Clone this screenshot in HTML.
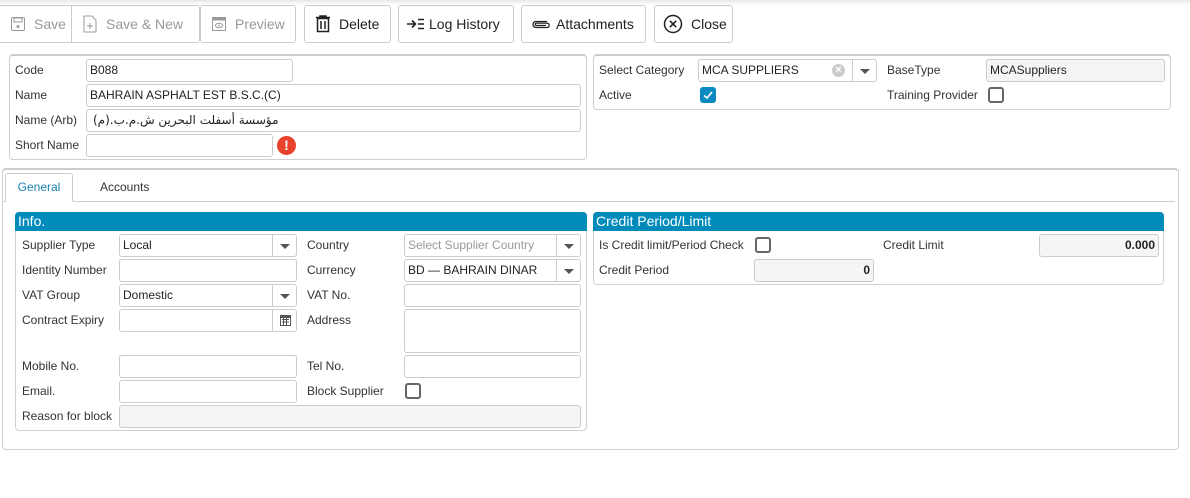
<!DOCTYPE html>
<html><head><meta charset="utf-8"><style>
*{box-sizing:border-box;margin:0;padding:0}
body{width:1190px;height:498px;background:#fff;font-family:"Liberation Sans","Noto Sans CJK SC",sans-serif;font-size:12px;color:#333;position:relative;overflow:hidden}
.a{position:absolute}
.btn{position:absolute;top:5px;height:38px;border:1px solid #ccc;border-radius:3px;background:#fff;font-size:14px;display:flex;align-items:center;padding-left:10px;color:#222}
.btn.dis{color:#999}
.btn svg{margin-right:8px}
.pnl{position:absolute;border:1px solid #d0d0d0;border-top:2px solid #ccc;border-radius:4px}
.lb{position:absolute;font-size:12px;color:#333;line-height:14px}
.in{position:absolute;height:23px;border:1px solid #ccc;border-radius:3px;background:#fff;font-size:12px;line-height:21px;padding-left:3px;color:#222;white-space:nowrap;overflow:hidden}
.ro{background:#f5f5f5}
.dd{position:absolute;right:0;top:0;width:24px;height:21px;border-left:1px solid #ccc}
.dd:after{content:"";position:absolute;left:7px;top:9px;border-left:5px solid transparent;border-right:5px solid transparent;border-top:5px solid #555}
.cb{position:absolute;width:16px;height:16px;border:2px solid #666;border-radius:3px;background:#fff}
.hd{position:absolute;height:19px;background:#008bbb;color:#fff;font-size:14px;line-height:19px;padding-left:3px;border-radius:4px 4px 0 0}
</style></head><body>
<div class="a" style="left:0;top:0;width:1190px;height:5px;background:linear-gradient(#e8e8e8,#fff)"></div>

<div class="btn dis" style="left:0;width:72px;border-radius:0 0 0 0;border-left:none">
<svg width="16" height="16" viewBox="0 0 16 16"><rect x="1.5" y="1.5" width="13" height="13" rx="1.5" fill="none" stroke="#999"/><rect x="4" y="2" width="8" height="4" fill="none" stroke="#999"/><circle cx="8" cy="10.5" r="1.5" fill="#999"/></svg>Save</div>
<div class="btn dis" style="left:71px;width:129px;border-radius:0 3px 3px 0">
<svg width="16" height="18" viewBox="0 0 16 18"><path d="M2 1H10L14 5V17H2Z" fill="none" stroke="#999"/><path d="M8 8V14M5 11H11" stroke="#999"/></svg>Save &amp; New</div>
<div class="btn dis" style="left:200px;width:96px">
<svg width="16" height="16" viewBox="0 0 16 16"><rect x="1.5" y="1.5" width="13" height="13" fill="none" stroke="#999"/><rect x="1.5" y="1.5" width="13" height="3" fill="#999"/><ellipse cx="8" cy="9.5" rx="3.5" ry="2.2" fill="none" stroke="#999"/><circle cx="8" cy="9.5" r="0.9" fill="#999"/></svg>Preview</div>
<div class="btn" style="left:304px;width:87px">
<svg width="16" height="18" viewBox="0 0 16 18"><path d="M1 2.5H15M5 2.5V1H11V2.5" stroke="#222" stroke-width="1.5" fill="none"/><rect x="2.5" y="3.5" width="11" height="13" fill="none" stroke="#222" stroke-width="1.5"/><path d="M6 6V14M10 6V14" stroke="#222" stroke-width="1.5"/></svg>Delete</div>
<div class="btn" style="left:398px;width:116px;padding-left:8px">
<svg width="18" height="12" viewBox="0 0 18 12" style="margin-right:4px"><path d="M0 6H8M5 2.5L8.5 6L5 9.5" stroke="#222" stroke-width="1.6" fill="none"/><path d="M11 1.5H17M11 6H17M11 10.5H17" stroke="#222" stroke-width="1.6"/></svg>Log History</div>
<div class="btn" style="left:521px;width:125px;padding-left:8px">
<svg width="20" height="12" viewBox="0 0 20 12" style="margin-right:6px"><path d="M17 3.5H6a3 3 0 0 0 0 6h11a2.2 2.2 0 0 0 0-4.4H6.5a1.2 1.2 0 0 0 0 2.4H16" fill="none" stroke="#222" stroke-width="1.3"/></svg>Attachments</div>
<div class="btn" style="left:654px;width:79px;padding-left:8px">
<svg width="20" height="20" viewBox="0 0 20 20"><circle cx="10" cy="10" r="8.5" fill="none" stroke="#222" stroke-width="1.5"/><path d="M6.8 6.8L13.2 13.2M13.2 6.8L6.8 13.2" stroke="#222" stroke-width="1.5"/></svg>Close</div>

<!-- top left panel -->
<div class="pnl" style="left:9px;top:54px;width:578px;height:106px"></div>
<div class="lb" style="left:15px;top:63px">Code</div>
<div class="in" style="left:86px;top:59px;width:207px">B088</div>
<div class="lb" style="left:15px;top:88px">Name</div>
<div class="in" style="left:86px;top:84px;width:495px">BAHRAIN ASPHALT EST B.S.C.(C)</div>
<div class="lb" style="left:15px;top:113px">Name (Arb)</div>
<div class="in" style="left:86px;top:109px;width:495px;font-family:'DejaVu Sans',sans-serif" dir="rtl"><span style="float:left;padding-left:3px" dir="rtl">مؤسسة أسفلت البحرين ش.م.ب.(م)</span></div>
<div class="lb" style="left:15px;top:138px">Short Name</div>
<div class="in" style="left:86px;top:134px;width:187px"></div>
<div class="a" style="left:277px;top:136px;width:19px;height:19px;border-radius:50%;background:#e8412c;color:#fff;font-weight:bold;font-size:14px;text-align:center;line-height:19px">!</div>

<!-- top right panel -->
<div class="pnl" style="left:593px;top:54px;width:578px;height:56px"></div>
<div class="lb" style="left:599px;top:63px">Select Category</div>
<div class="in" style="left:698px;top:59px;width:179px">MCA SUPPLIERS<div class="a" style="left:133px;top:4px;width:13px;height:13px;border-radius:50%;background:#ccc;color:#fff;font-size:11px;line-height:13px;text-align:center;font-weight:bold">×</div><div class="dd"></div></div>
<div class="lb" style="left:887px;top:63px">BaseType</div>
<div class="in ro" style="left:986px;top:59px;width:179px">MCASuppliers</div>
<div class="lb" style="left:599px;top:88px">Active</div>
<div class="a" style="left:700px;top:87px;width:16px;height:16px;border-radius:3px;background:#0a8ac0"><svg width="16" height="16" viewBox="0 0 16 16"><path d="M4 8.5L7 11L12 5" stroke="#fff" stroke-width="1.6" fill="none"/></svg></div>
<div class="lb" style="left:887px;top:88px">Training Provider</div>
<div class="cb" style="left:988px;top:87px"></div>

<!-- tab panel -->
<div class="pnl" style="left:2px;top:168px;width:1177px;height:282px;border-top-width:2px"></div>
<div class="a" style="left:3px;top:201px;width:1172px;height:1px;background:#ccc"></div>
<div class="a" style="left:5px;top:173px;width:68px;height:29px;border:1px solid #ccc;border-bottom:1px solid #fff;border-radius:3px 3px 0 0;background:#fff;color:#1a7fb0;text-align:center;line-height:27px;font-size:12px">General</div>
<div class="lb" style="left:100px;top:180px">Accounts</div>

<!-- Info -->
<div class="pnl" style="left:15px;top:212px;width:572px;height:219px;border-top-width:1px"></div>
<div class="hd" style="left:15px;top:212px;width:572px">Info.</div>
<div class="lb" style="left:22px;top:238px">Supplier Type</div>
<div class="in" style="left:119px;top:234px;width:178px">Local<div class="dd"></div></div>
<div class="lb" style="left:22px;top:263px">Identity Number</div>
<div class="in" style="left:119px;top:259px;width:178px"></div>
<div class="lb" style="left:22px;top:288px">VAT Group</div>
<div class="in" style="left:119px;top:284px;width:178px">Domestic<div class="dd"></div></div>
<div class="lb" style="left:22px;top:313px">Contract Expiry</div>
<div class="in" style="left:119px;top:309px;width:178px"><div class="a" style="right:0;top:0;width:24px;height:21px;border-left:1px solid #ccc"><svg width="24" height="21" viewBox="0 0 24 21"><rect x="7" y="5" width="11" height="11" fill="#555"/><rect x="8" y="8" width="9" height="7" fill="#fff"/><path d="M9 9.5h7M9 12h7M10.5 8v7M13.5 8v7" stroke="#555" stroke-width="1"/></svg></div></div>
<div class="lb" style="left:22px;top:359px">Mobile No.</div>
<div class="in" style="left:119px;top:355px;width:178px"></div>
<div class="lb" style="left:22px;top:384px">Email.</div>
<div class="in" style="left:119px;top:380px;width:178px"></div>
<div class="lb" style="left:22px;top:409px">Reason for block</div>
<div class="in ro" style="left:119px;top:405px;width:462px"></div>

<div class="lb" style="left:307px;top:238px">Country</div>
<div class="in" style="left:404px;top:234px;width:177px;color:#999">Select Supplier Country<div class="dd"></div></div>
<div class="lb" style="left:307px;top:263px">Currency</div>
<div class="in" style="left:404px;top:259px;width:177px">BD — BAHRAIN DINAR<div class="dd"></div></div>
<div class="lb" style="left:307px;top:288px">VAT No.</div>
<div class="in" style="left:404px;top:284px;width:177px"></div>
<div class="lb" style="left:307px;top:313px">Address</div>
<div class="in" style="left:404px;top:309px;width:177px;height:44px"></div>
<div class="lb" style="left:307px;top:359px">Tel No.</div>
<div class="in" style="left:404px;top:355px;width:177px"></div>
<div class="lb" style="left:307px;top:384px">Block Supplier</div>
<div class="cb" style="left:405px;top:383px"></div>

<!-- Credit -->
<div class="pnl" style="left:593px;top:212px;width:571px;height:73px;border-top-width:1px"></div>
<div class="hd" style="left:593px;top:212px;width:571px">Credit Period/Limit</div>
<div class="lb" style="left:599px;top:238px">Is Credit limit/Period Check</div>
<div class="cb" style="left:755px;top:237px"></div>
<div class="lb" style="left:883px;top:238px">Credit Limit</div>
<div class="in ro" style="left:1039px;top:234px;width:120px;text-align:right;padding-right:3px;font-weight:bold">0.000</div>
<div class="lb" style="left:599px;top:263px">Credit Period</div>
<div class="in ro" style="left:754px;top:259px;width:120px;text-align:right;padding-right:3px;font-weight:bold">0</div>
</body></html>
